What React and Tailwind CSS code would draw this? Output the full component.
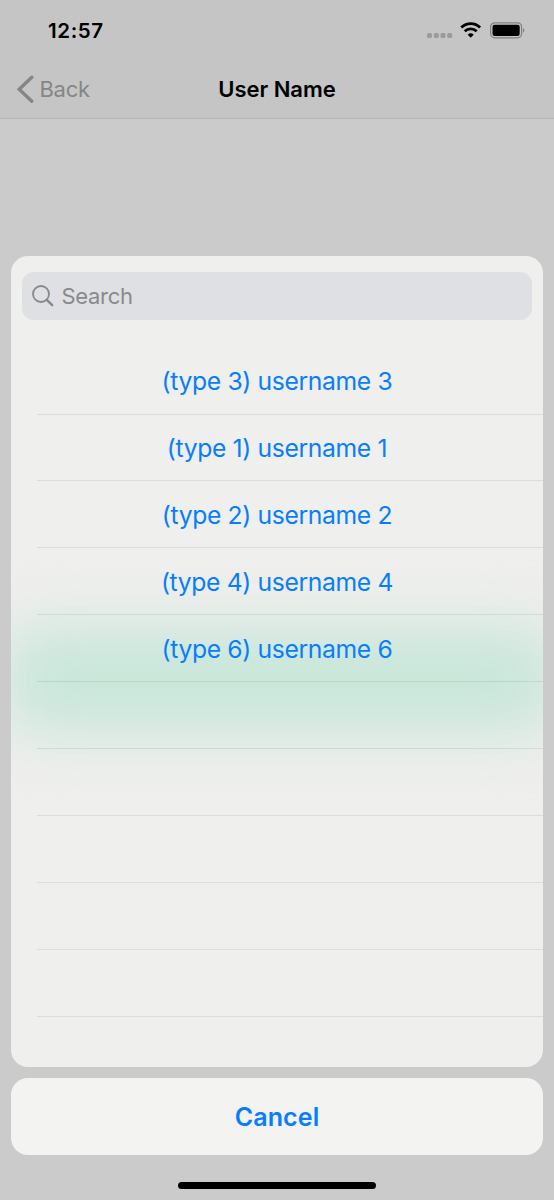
import React from 'react';

const users = [
  '(type 3) username 3',
  '(type 1) username 1',
  '(type 2) username 2',
  '(type 4) username 4',
  '(type 6) username 6',
];
const emptyRows = [0, 1, 2, 3, 4];

function StatusBar() {
  return (
    <div className="flex h-[60px] items-center justify-between pl-[48px] pr-[29px]">
      <span className="pt-px text-[20.5px] font-semibold leading-6 tracking-[0.6px] text-black">12:57</span>
      <svg width="98" height="20" viewBox="0 0 98 20">
        <g fill="#9b9b9b">
          <rect x="0" y="13" width="5" height="5" rx="1.5" />
          <rect x="6.8" y="13" width="5" height="5" rx="1.5" />
          <rect x="13.5" y="13" width="5" height="5" rx="1.5" />
          <rect x="20.2" y="13" width="5" height="5" rx="1.5" />
        </g>
        <g fill="none" stroke="#000" strokeWidth="2.8">
          <path d="M34.3 7.6a13.2 13.2 0 0 1 18.8 0" />
          <path d="M37.7 11.3a8.5 8.5 0 0 1 12 0" />
        </g>
        <path d="M43.7 17.8l-3-3.1a4.4 4.4 0 0 1 6 0z" fill="#000" />
        <rect x="63.6" y="2.8" width="31" height="15" rx="4.2" fill="none" stroke="#818181" strokeWidth="1.2" />
        <rect x="65.5" y="4.7" width="27.2" height="11.2" rx="2.2" fill="#000" />
        <path d="M96 8v4.8c1.8-.8 1.8-4 0-4.8z" fill="#818181" />
      </svg>
    </div>
  );
}

function NavBar() {
  return (
    <div className="grid h-[58px] grid-cols-[1fr_auto_1fr] items-center pb-[1px] pl-[16px] pr-4">
      <div className="flex items-center gap-[5.5px] text-[#858585]">
        <svg width="18" height="30" viewBox="0 0 18 30" fill="none" stroke="currentColor" strokeWidth="3.4">
          <path d="M15.8 3.2L3.2 15.2l12.6 12" strokeLinecap="round" strokeLinejoin="miter" />
        </svg>
        <span className="text-[22px] leading-7 tracking-[-0.3px]">Back</span>
      </div>
      <h1 className="text-[22px] font-semibold leading-7 tracking-[-0.05px] text-black">User Name</h1>
    </div>
  );
}

function SearchField() {
  return (
    <div className="mx-[11px] flex h-[48px] items-center rounded-[12px] bg-[#dfe0e3] pl-[10px] text-[#88898c]">
      <svg width="22" height="22" viewBox="0 0 22 22" fill="none" stroke="currentColor">
        <circle cx="9" cy="9" r="8" strokeWidth="1.8" />
        <path d="M14.8 14.8l5.4 5.4" strokeWidth="2.4" strokeLinecap="round" />
      </svg>
      <span className="ml-[7.5px] text-[22px] leading-7 tracking-[-0.3px]">Search</span>
    </div>
  );
}

export default function App() {
  return (
    <div className="flex h-[1200px] w-[554px] flex-col overflow-hidden bg-[#cbcbcb] font-['Inter',sans-serif]">
      <header className="border-b border-[#b5b5b5] bg-[#c5c5c5]">
        <StatusBar />
        <NavBar />
      </header>

      <main className="relative mx-[11px] mt-[137px] h-[811px] shrink-0 overflow-hidden rounded-[17px] bg-[#efefed] pt-[16px]">
        <div className="pointer-events-none absolute left-[-8px] top-[372px] h-[104px] w-[556px] rounded-[30px] bg-[#c8e6d9] blur-[29px]" />
        <div className="relative">
          <SearchField />
          <ul className="mt-[27.6px]">
            {users.map((name) => (
              <li key={name} className="ml-[26px] h-[66.95px] border-b border-black/8">
                <div className="-ml-[26px] flex h-full items-center justify-center pt-[2.4px] text-[24.7px] tracking-[-0.35px] text-[#087eff]">
                  {name}
                </div>
              </li>
            ))}
            {emptyRows.map((row) => (
              <li key={row} className="ml-[26px] h-[66.95px] border-b border-black/8" />
            ))}
          </ul>
        </div>
      </main>

      <button className="mx-[11px] mt-[11px] flex h-[77px] shrink-0 items-center justify-center rounded-[17px] bg-[#f3f3f1] pt-[2px] text-[25px] font-semibold tracking-[0.1px] text-[#087eff]">
        Cancel
      </button>

      <div className="mx-auto mt-[27px] h-[7px] w-[198px] shrink-0 rounded-full bg-black" />
    </div>
  );
}
